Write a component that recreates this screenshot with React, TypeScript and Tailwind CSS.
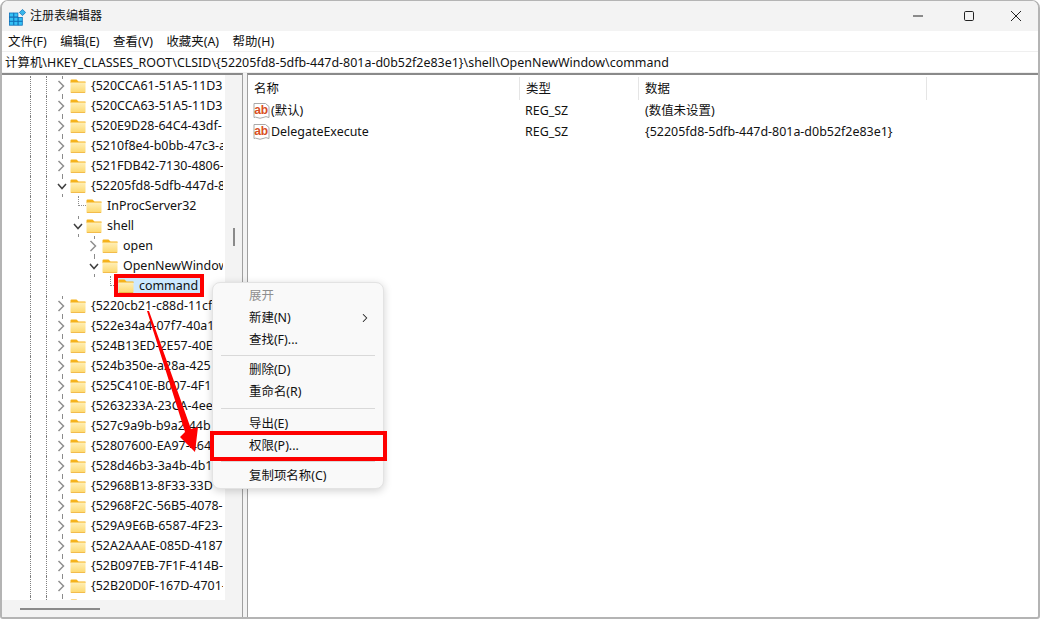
import { ChevronRight } from "lucide-react";

const font = { fontFamily: '"Noto Sans", "Noto Sans CJK SC", sans-serif' };

type Row = { label: string; level?: number; open?: boolean; leaf?: boolean; selected?: boolean };

const rows: Row[] = [
  { label: "{520CCA61-51A5-11D3" },
  { label: "{520CCA63-51A5-11D3" },
  { label: "{520E9D28-64C4-43df-" },
  { label: "{5210f8e4-b0bb-47c3-a" },
  { label: "{521FDB42-7130-4806-" },
  { label: "{52205fd8-5dfb-447d-8", open: true },
  { label: "InProcServer32", level: 1, leaf: true },
  { label: "shell", level: 1, open: true },
  { label: "open", level: 2 },
  { label: "OpenNewWindow", level: 2, open: true },
  { label: "command", level: 3, leaf: true, selected: true },
  { label: "{5220cb21-c88d-11cf" },
  { label: "{522e34a4-07f7-40a1" },
  { label: "{524B13ED-2E57-40E" },
  { label: "{524b350e-a28a-425" },
  { label: "{525C410E-B007-4F1" },
  { label: "{5263233A-23CA-4ee" },
  { label: "{527c9a9b-b9a2-44b" },
  { label: "{52807600-EA97-464" },
  { label: "{528d46b3-3a4b-4b1" },
  { label: "{52968B13-8F33-33D" },
  { label: "{52968F2C-56B5-4078-" },
  { label: "{529A9E6B-6587-4F23-" },
  { label: "{52A2AAAE-085D-4187" },
  { label: "{52B097EB-7F1F-414B-" },
  { label: "{52B20D0F-167D-4701-" },
  { label: "" },
];

function Folder() {
  return (
    <svg width="16" height="14" viewBox="0 0 16 14" className="shrink-0">
      <defs>
        <linearGradient id="fb" x1="0" y1="0" x2="0" y2="1">
          <stop offset="0" stopColor="#ffefb8" />
          <stop offset="1" stopColor="#fdd96f" />
        </linearGradient>
      </defs>
      <path d="M0.5 1.5 Q0.5 0.5 1.5 0.5 H6.5 L8.5 2.5 H15.5 V4 H0.5 Z" fill="#f5b21a" />
      <rect x="0.5" y="3.5" width="15" height="10" rx="0.8" fill="url(#fb)" />
      <path d="M0.8 13.5 H15.2" stroke="#f0b030" strokeWidth="0.8" />
    </svg>
  );
}

function AbIcon() {
  return (
    <svg width="17" height="18" viewBox="0 0 17 18" className="shrink-0">
      <path d="M1 1.5 H12.5 L16 4.5 V15.5 Q13 13.8 10 15.5 Q7 17 4 15.5 Q2.5 14.8 1 15.5 Z" fill="#fff" stroke="#a9a9a9" />
      <text x="1.2" y="12" fontSize="12" fontWeight="700" fill="#d94f25" style={{ fontFamily: '"Liberation Sans", sans-serif' }}>
        ab
      </text>
    </svg>
  );
}

function AppIcon() {
  const cells = [
    [0, 1],
    [4.4, 1],
    [0, 5.4],
    [4.4, 5.4],
    [8.8, 5.4],
    [0, 9.4],
    [4.4, 9.4],
    [8.8, 9.4],
  ];
  return (
    <svg width="17" height="17" viewBox="0 0 17 17" className="ml-[7px] mt-[2px] shrink-0">
      <g transform="translate(0.5 3)">
        {cells.map(([x, y]) => (
          <rect key={`${x}-${y}`} x={x} y={y} width="4" height="3.8" fill="#35c1f5" stroke="#0b6fb8" strokeWidth="0.8" />
        ))}
      </g>
      <rect x="11.3" y="1.3" width="4.4" height="4.4" fill="#38b6ea" stroke="#0b6fb8" strokeWidth="0.7" transform="rotate(45 13.5 3.5)" />
    </svg>
  );
}

function Stub({ className }: { className: string }) {
  return <span className={`w-0 border-l border-dotted border-[#8c8c8c] ${className}`} />;
}

function TreeRow({ row }: { row: Row }) {
  const level = row.level ?? 0;
  return (
    <div className="flex h-5 shrink-0 items-center whitespace-nowrap pl-7">
      <span className="h-5 w-4 shrink-0 border-l border-dotted border-[#808080]" />
      <span className="h-5 w-2 shrink-0 border-l border-dotted border-[#808080]" />
      {level === 1 && <span className="w-4 shrink-0" />}
      {level === 2 && <span className="w-8 shrink-0" />}
      {level === 3 && <span className="w-12 shrink-0" />}
      {row.leaf ? (
        <span className="flex h-5 w-4 shrink-0 items-center">
          <span className="ml-2 h-[10px] w-2 -translate-y-[5px] border-b border-l border-dotted border-[#8c8c8c]" />
        </span>
      ) : (
        <span className="flex h-5 w-4 shrink-0 flex-col items-center justify-between">
          <Stub className="h-[2px]" />
          {row.open ? (
            <svg width="10" height="7" viewBox="0 0 10 7">
              <path d="M1 1 L5 5.5 L9 1" fill="none" stroke="#404040" strokeWidth="1.5" />
            </svg>
          ) : (
            <svg width="8" height="12" viewBox="0 0 8 12" className="-translate-x-px">
              <path d="M1.5 1 L6.5 6 L1.5 11" fill="none" stroke="#8f8f8f" strokeWidth="1.5" />
            </svg>
          )}
          <Stub className="h-[2px]" />
        </span>
      )}
      <span className={`flex h-[18px] items-center pr-[3px] ${row.selected ? "bg-[#cce8ff]" : ""}`}>
        <Folder />
        <span className="ml-[5px] text-[12.45px] text-[#111]">{row.label}</span>
      </span>
    </div>
  );
}

function Header({ label, className }: { label: string; className: string }) {
  return (
    <div className={`flex h-[23px] shrink-0 items-center border-r border-[#e5e5e5] pl-[6px] pt-px text-[12.45px] text-[#111] ${className}`}>
      {label}
    </div>
  );
}

function ValueRow({ name, data }: { name: string; data: string }) {
  return (
    <div className="flex h-[21px] items-center text-[12.45px] text-[#111]">
      <div className="flex w-[271px] shrink-0 items-center pl-[5px]">
        <AbIcon />
        <span className="ml-px">{name}</span>
      </div>
      <div className="w-[120px] shrink-0 pl-[6px]">REG_SZ</div>
      <div className="pl-[6px]">{data}</div>
    </div>
  );
}

function MenuItem({ label, gray, arrow }: { label: string; gray?: boolean; arrow?: boolean }) {
  return (
    <div className={`flex h-[22px] items-center justify-between pl-[36px] pr-[11px] text-[12.45px] ${gray ? "text-[#8f8f8f]" : "text-[#111]"}`}>
      <span>{label}</span>
      {arrow && <ChevronRight size={14} strokeWidth={1.8} className="text-[#222]" />}
    </div>
  );
}

function Sep({ className }: { className: string }) {
  return (
    <div className={`flex items-center px-2 ${className}`}>
      <div className="h-px w-full bg-[#d9d9d9]" />
    </div>
  );
}

export default function App() {
  return (
    <div className="relative h-[620px] w-[1040px] overflow-hidden bg-white" style={font}>
      <div className="flex h-[619px] w-[1040px] flex-col overflow-hidden rounded-t-lg rounded-b-[3px] border-2 border-t-[1px] border-[#b4b4b4] bg-white">
        {/* Title bar */}
        <div className="flex h-[30px] shrink-0 items-center bg-[#f3f3f3]">
          <AppIcon />
          <span className="ml-[4px] text-[12px] text-[#111]">注册表编辑器</span>
          <div className="ml-auto flex items-center">
            <svg width="12" height="12" viewBox="0 0 12 12" className="mr-[39px]">
              <path d="M1 6 H11" stroke="#222" strokeWidth="1" />
            </svg>
            <svg width="12" height="12" viewBox="0 0 12 12" className="mr-[35px]">
              <rect x="1.5" y="1.5" width="9" height="9" rx="1.2" fill="none" stroke="#222" strokeWidth="1" />
            </svg>
            <svg width="12" height="12" viewBox="0 0 12 12" className="mr-[16px]">
              <path d="M1 1 L11 11 M11 1 L1 11" stroke="#222" strokeWidth="1" />
            </svg>
          </div>
        </div>

        {/* Menu bar */}
        <div className="flex h-[20px] shrink-0 items-center gap-[13.5px] pl-[6px] pt-[2px] text-[12.45px] text-[#111]">
          <span>文件(F)</span>
          <span>编辑(E)</span>
          <span>查看(V)</span>
          <span>收藏夹(A)</span>
          <span>帮助(H)</span>
        </div>

        {/* Address bar */}
        <div className="flex h-[22px] shrink-0 items-center border-y border-[#efefef] pl-[3px] pt-[2px] text-[12.45px] text-[#111]">
          计算机\HKEY_CLASSES_ROOT\CLSID\{"{"}52205fd8-5dfb-447d-801a-d0b52f2e83e1{"}"}\shell\OpenNewWindow\command
        </div>

        <div className="flex min-h-0 flex-1">
          {/* Tree pane */}
          <div className="flex w-[241px] shrink-0 flex-col border-r border-t-2 border-[#8a8a8a] border-r-[#a0a0a0]">
            <div className="flex min-h-0 flex-1">
              <div className="mr-[2px] min-w-0 flex-1 overflow-hidden">
                <div className="mt-px flex flex-col">
                  {rows.map((r, i) => (
                    <TreeRow key={i} row={r} />
                  ))}
                </div>
              </div>
              <div className="flex w-[17px] shrink-0 justify-center bg-[#f3f3f3] pt-[153px]">
                <div className="h-[18px] w-[2px] bg-[#8a8a8a]" />
              </div>
            </div>
            <div className="flex h-[17px] shrink-0 items-center bg-[#f3f3f3] pl-[18px]">
              <div className="h-[2px] w-[80px] bg-[#8a8a8a]" />
            </div>
          </div>

          <div className="w-1 shrink-0 bg-[#f3f3f3]" />

          {/* Value pane */}
          <div className="min-w-0 flex-1 border-l border-t-2 border-[#8a8a8a] border-l-[#a0a0a0]">
            <div className="mt-[2px] flex">
              <Header label="名称" className="w-[272px]" />
              <Header label="类型" className="w-[119px]" />
              <Header label="数据" className="w-[288px]" />
            </div>
            <div className="mt-px">
              <ValueRow name="(默认)" data="(数值未设置)" />
              <ValueRow name="DelegateExecute" data="{52205fd8-5dfb-447d-801a-d0b52f2e83e1}" />
            </div>
          </div>
        </div>
      </div>

      {/* Context menu */}
      <div className="absolute left-[212px] top-[282px] h-[207px] w-[172px] rounded-lg border border-[#e3e3e3] bg-[#f9f9f9] pt-[2px] shadow-[0_2px_8px_rgba(0,0,0,0.18)]">
        <MenuItem label="展开" gray />
        <MenuItem label="新建(N)" arrow />
        <MenuItem label="查找(F)..." />
        <Sep className="h-[8px]" />
        <MenuItem label="删除(D)" />
        <MenuItem label="重命名(R)" />
        <Sep className="h-[10px]" />
        <MenuItem label="导出(E)" />
        <MenuItem label="权限(P)..." />
        <Sep className="h-[8px]" />
        <MenuItem label="复制项名称(C)" />
      </div>

      {/* Annotations */}
      <div className="absolute left-[114px] top-[274px] h-[23px] w-[90px] border-4 border-[#fe0000]" />
      <div className="absolute left-[210px] top-[431px] h-[30px] w-[177px] border-4 border-[#fe0000]" />
      <svg width="80" height="160" viewBox="0 0 80 160" className="absolute left-[130px] top-[300px]">
        <path d="M17 11 L19 11 L61 129 L68 127 L65 152 L50 137 L55 132 Z" fill="#fe0000" />
      </svg>
    </div>
  );
}
